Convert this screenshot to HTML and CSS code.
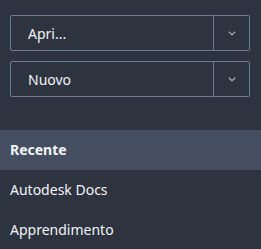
FILE: index.html
```html
<!DOCTYPE html>
<html lang="it">
<head>
<meta charset="utf-8">
<link rel="stylesheet" href="styles.css">
</head>
<body>
<div class="panel">
  <div class="actions">
    <div class="split">
      <button class="split-main">Apri...</button>
      <button class="split-arrow" aria-label="Altre opzioni">
        <svg width="8" height="5" viewBox="0 0 8 5"><path d="M0.8 0.8 L4 3.8 L7.2 0.8" fill="none" stroke="#9aa6b6" stroke-width="1.3"/></svg>
      </button>
    </div>
    <div class="split">
      <button class="split-main">Nuovo</button>
      <button class="split-arrow" aria-label="Altre opzioni">
        <svg width="8" height="5" viewBox="0 0 8 5"><path d="M0.8 0.8 L4 3.8 L7.2 0.8" fill="none" stroke="#9aa6b6" stroke-width="1.3"/></svg>
      </button>
    </div>
  </div>
  <nav class="nav">
    <div class="nav-item active">Recente</div>
    <div class="nav-item">Autodesk Docs</div>
    <div class="nav-item">Apprendimento</div>
  </nav>
</div>
</body>
</html>
```
FILE: styles.css
```css
html, body {
  margin: 0;
  padding: 0;
  background: #2d333f;
}
body {
  width: 261px;
  height: 249px;
  overflow: hidden;
  font-family: "Noto Sans", "Open Sans", sans-serif;
  font-size: 14px;
  color: #f2f4f7;
}
.panel {
  display: flex;
  flex-direction: column;
}
.actions {
  display: flex;
  flex-direction: column;
  gap: 10px;
  padding: 15px 11px 0 10px;
}
.split {
  display: flex;
  height: 36px;
}
.split button {
  background: transparent;
  border: 1px solid #6c7d92;
  color: #f2f4f7;
  font: inherit;
  margin: 0;
  height: 36px;
  box-sizing: border-box;
}
.split-main {
  flex: 1;
  text-align: left;
  padding: 0 0 0 17px;
  border-radius: 2px 0 0 2px;
}
.split-arrow {
  width: 36px;
  padding: 0;
  display: flex;
  align-items: center;
  justify-content: center;
  border-left: none !important;
  border-radius: 0 2px 2px 0;
}
.nav {
  margin-top: 33px;
  display: flex;
  flex-direction: column;
}
.nav-item {
  height: 40px;
  line-height: 40px;
  padding-left: 10px;
}
.nav-item.active {
  background: #454e60;
  font-weight: 700;
}
```
